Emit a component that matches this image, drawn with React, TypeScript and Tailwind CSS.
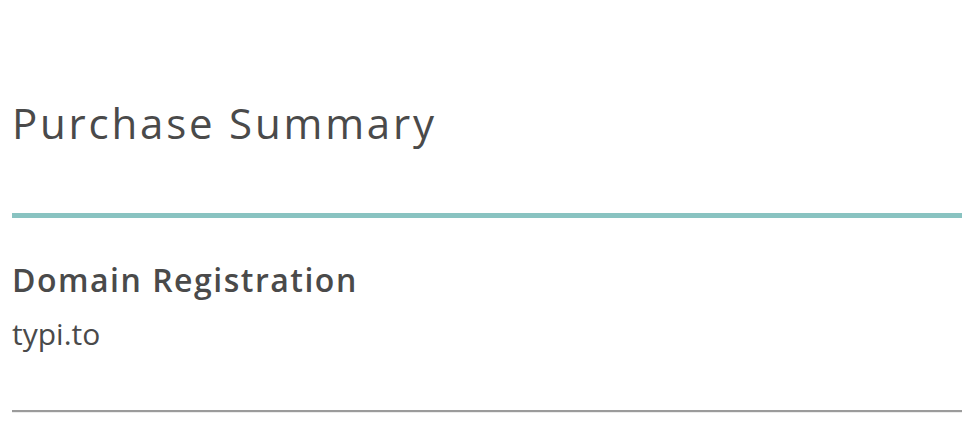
export default function App() {
  return (
    <div className="min-h-screen bg-white pl-[12px] text-[#4a4a4a]" style={{ fontFamily: "'Open Sans', Lato, sans-serif" }}>
      <div className="pt-[102px]">
        <h1 className="text-[42px] leading-[42px] font-normal tracking-[2.8px]">Purchase Summary</h1>
      </div>
      <div className="mt-[69px] h-[5px] bg-[#89c3c1]" />
      <div className="pt-[46px]">
        <h2 className="text-[32px] leading-[32px] font-semibold tracking-[1.5px]">Domain Registration</h2>
        <p className="mt-[23px] text-[30px] leading-[30px]">typi.to</p>
      </div>
      <div className="mt-[61px] h-[2px] bg-[#9b9b9b]" />
      <div className="h-[1px] bg-[#ececec]" />
    </div>
  );
}
